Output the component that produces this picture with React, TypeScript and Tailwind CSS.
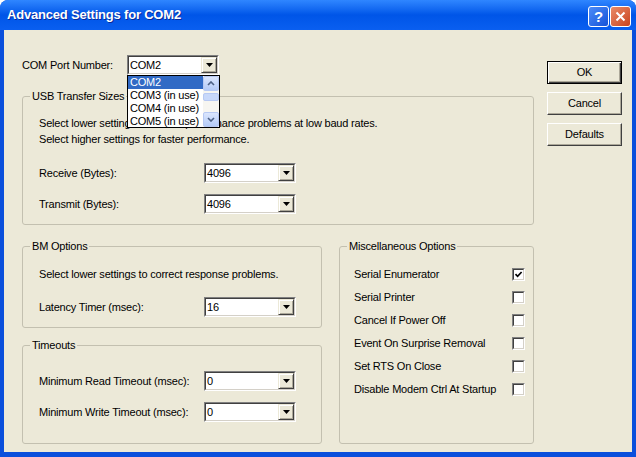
import type { ReactNode } from "react";

const font = "font-['Liberation_Sans',Arial,sans-serif]";

function Arrow() {
  return (
    <svg width="7" height="4" viewBox="0 0 7 4">
      <path d="M0 0h7L3.5 4z" fill="#000" />
    </svg>
  );
}

function Combo({ value }: { value: string }) {
  return (
    <div className="flex h-[20px] w-[92px] border border-t-[#808080] border-l-[#808080] border-b-white border-r-white">
      <div className="flex flex-1 border border-t-[#404040] border-l-[#404040] border-b-[#d4d0c8] border-r-[#d4d0c8] bg-white">
        <span className="flex-1 pl-[1px] leading-[16px]">{value}</span>
        <div className="flex w-[16px] items-center justify-center border border-t-[#ece9d8] border-l-[#ece9d8] border-b-[#404040] border-r-[#404040] bg-[#ece9d8] shadow-[inset_1px_1px_0_#fff,inset_-1px_-1px_0_#aca899]">
          <Arrow />
        </div>
      </div>
    </div>
  );
}

function Row({ label, value, className = "" }: { label: string; value: string; className?: string }) {
  return (
    <div className={`flex h-[20px] items-center ${className}`}>
      <span className="w-[165px]">{label}</span>
      <Combo value={value} />
    </div>
  );
}

function Group({ title, className = "", children }: { title: string; className?: string; children: ReactNode }) {
  return (
    <fieldset className={`rounded-[3px] border border-[#c3c0b0] ${className}`}>
      <legend className="ml-[7px] px-[2px] leading-[13px]">{title}</legend>
      {children}
    </fieldset>
  );
}

function Button({ children, primary }: { children: ReactNode; primary?: boolean }) {
  return (
    <button
      className={
        primary
          ? "h-[23px] w-[75px] border border-black bg-[#ece9d8] shadow-[inset_1px_1px_0_#fff,inset_-1px_-1px_0_#404040,inset_-2px_-2px_0_#aca899]"
          : "h-[23px] w-[75px] border border-t-white border-l-white border-b-[#404040] border-r-[#404040] bg-[#ece9d8] shadow-[inset_-1px_-1px_0_#aca899]"
      }
    >
      {children}
    </button>
  );
}

function Check({ checked }: { checked?: boolean }) {
  return (
    <div className="h-[13px] w-[13px] border border-t-[#808080] border-l-[#808080] border-b-white border-r-white">
      <div className="flex h-full w-full items-center justify-center border border-t-[#404040] border-l-[#404040] border-b-[#d4d0c8] border-r-[#d4d0c8] bg-white">
        {checked && (
          <svg width="9" height="9" viewBox="0 0 9 9">
            <path d="M1.5 4.2 3.6 6.3 7.6 2" fill="none" stroke="#000" strokeWidth="1.7" />
          </svg>
        )}
      </div>
    </div>
  );
}

function ScrollBtn({ up }: { up?: boolean }) {
  return (
    <div className="flex h-[15px] items-center justify-center rounded-[2px] border border-[#b7c9f3] bg-gradient-to-b from-[#dbe6fd] to-[#b5cbf7]">
      <svg width="8" height="5" viewBox="0 0 8 5">
        <path d={up ? "M1 4 4 1 7 4" : "M1 1 4 4 7 1"} fill="none" stroke="#4d6185" strokeWidth="1.6" />
      </svg>
    </div>
  );
}

function PortList() {
  const items = ["COM2", "COM3 (in use)", "COM4 (in use)", "COM5 (in use)"];
  return (
    <div className="absolute left-0 top-[20px] z-10 flex h-[53px] w-[93px] border border-black bg-white">
      <div className="flex-1 overflow-hidden">
        {items.map((it, i) => (
          <div
            key={it}
            className={`h-[13px] whitespace-nowrap pl-[2px] leading-[13px] ${i === 0 ? "bg-[#316ac5] text-white" : ""}`}
          >
            {it}
          </div>
        ))}
      </div>
      <div className="flex w-[16px] flex-col bg-[#f7f6f1]">
        <ScrollBtn up />
        <div className="mt-[2px] h-[8px] rounded-[2px] border border-[#b7c9f3] bg-[#c8d8fa]" />
        <div className="flex-1" />
        <ScrollBtn />
      </div>
    </div>
  );
}

const misc: [string, boolean][] = [
  ["Serial Enumerator", true],
  ["Serial Printer", false],
  ["Cancel If Power Off", false],
  ["Event On Surprise Removal", false],
  ["Set RTS On Close", false],
  ["Disable Modem Ctrl At Startup", false],
];

export default function App() {
  return (
    <div className={`flex h-[457px] w-[636px] flex-col overflow-hidden rounded-t-[8px] bg-[#0a4fdc] text-[11px] tracking-[-0.2px] text-black ${font}`}>
      {/* title bar */}
      <div className="flex h-[30px] items-center bg-gradient-to-b from-[#2f86ff] via-[#0055e8] to-[#0a5ff0] pl-[7px] pr-[5px]">
        <span className="flex-1 text-[13px] font-bold tracking-[-0.2px] text-white [text-shadow:1px_1px_0_#0a2a9a]">
          Advanced Settings for COM2
        </span>
        <div className="flex gap-[1px] self-start pt-[6px]">
          <div className="flex h-[21px] w-[21px] items-center justify-center rounded-[3px] border border-white bg-gradient-to-br from-[#4d8cf8] to-[#1552d8] text-[15px] font-bold leading-none text-white">
            ?
          </div>
          <div className="flex h-[21px] w-[21px] items-center justify-center rounded-[3px] border border-white bg-gradient-to-br from-[#e98a66] to-[#c9421c]">
            <svg width="11" height="11" viewBox="0 0 11 11">
              <path d="M1.5 1.5 9.5 9.5M9.5 1.5 1.5 9.5" stroke="#fff" strokeWidth="2" />
            </svg>
          </div>
        </div>
      </div>

      {/* client area */}
      <div className="mx-[4px] mb-[5px] flex flex-1 bg-[#ece9d8] pl-[18px] pt-[25px]">
        <div className="flex w-[512px] flex-col">
          <div className="flex h-[20px] items-center">
            <span className="w-[105px]">COM Port Number:</span>
            <div className="relative">
              <Combo value="COM2" />
              <PortList />
            </div>
          </div>

          <Group title="USB Transfer Sizes" className="mt-[15px] w-[512px]">
            <div className="px-[16px] pb-[10px] pt-[12px]">
              <p className="leading-[16px]">Select lower settings to correct performance problems at low baud rates.</p>
              <p className="leading-[16px]">Select higher settings for faster performance.</p>
              <Row label="Receive (Bytes):" value="4096" className="mt-[16px]" />
              <Row label="Transmit (Bytes):" value="4096" className="mt-[11px]" />
            </div>
          </Group>

          <div className="mt-[15px] flex gap-[17px]">
            <div className="flex w-[300px] flex-col">
              <Group title="BM Options">
                <div className="px-[16px] pb-[10px] pt-[13px]">
                  <p className="leading-[16px]">Select lower settings to correct response problems.</p>
                  <Row label="Latency Timer (msec):" value="16" className="mt-[15px]" />
                </div>
              </Group>
              <Group title="Timeouts" className="mt-[11px]">
                <div className="px-[16px] pb-[21px] pt-[19px]">
                  <Row label="Minimum Read Timeout (msec):" value="0" />
                  <Row label="Minimum Write Timeout (msec):" value="0" className="mt-[11px]" />
                </div>
              </Group>
            </div>
            <Group title="Miscellaneous Options" className="w-[195px]">
              <div className="pl-[14px] pr-[8px] pt-[10px]">
                {misc.map(([label, on]) => (
                  <div key={label} className="flex h-[23px] items-center justify-between">
                    <span>{label}</span>
                    <Check checked={on} />
                  </div>
                ))}
              </div>
            </Group>
          </div>
        </div>

        <div className="ml-[13px] mt-[6px] flex flex-col gap-[8px]">
          <Button primary>OK</Button>
          <Button>Cancel</Button>
          <Button>Defaults</Button>
        </div>
      </div>
    </div>
  );
}
